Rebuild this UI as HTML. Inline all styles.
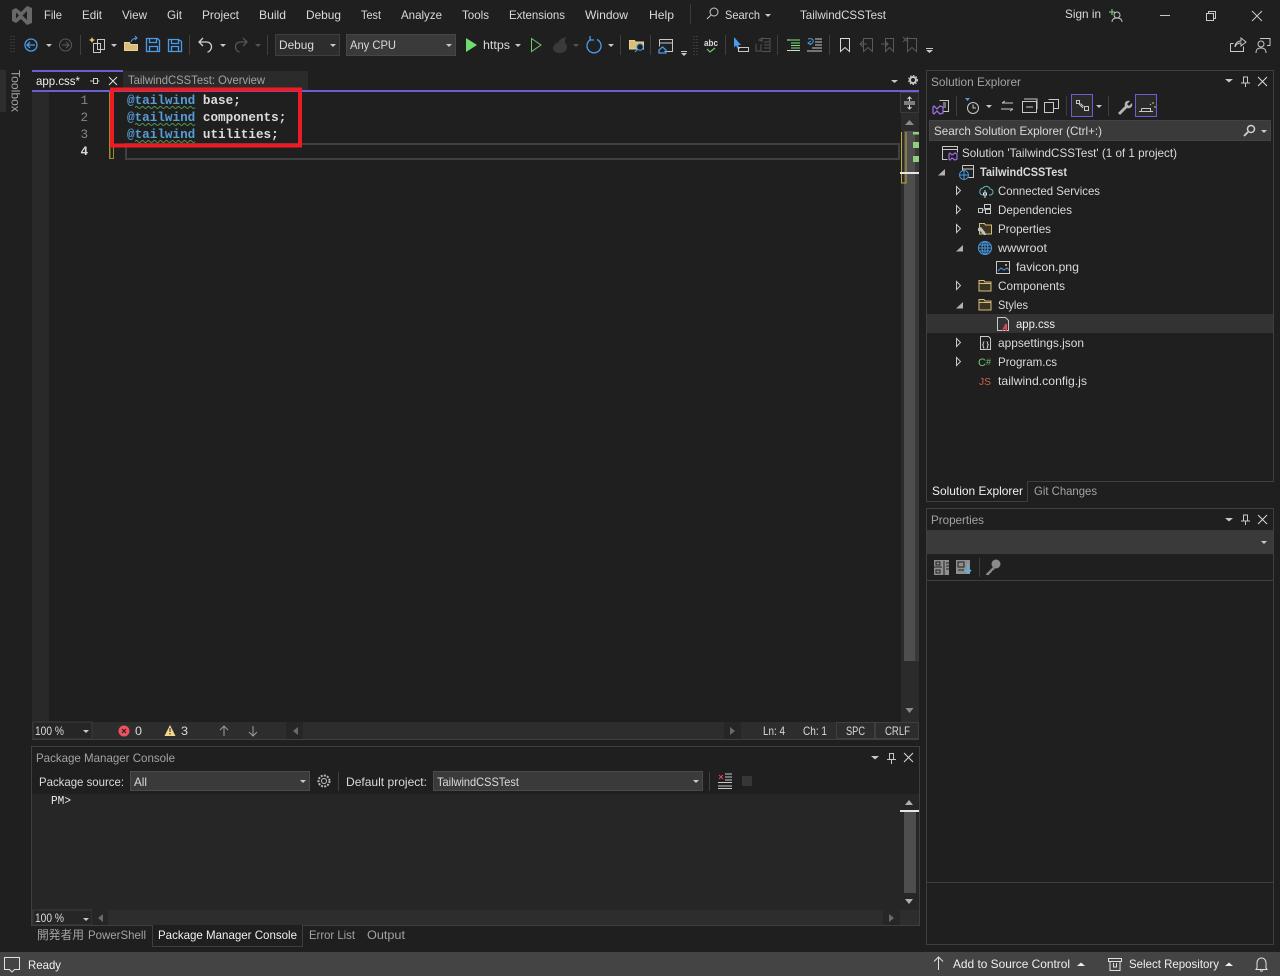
<!DOCTYPE html>
<html lang="en"><head><meta charset="utf-8"><title>TailwindCSSTest - Visual Studio</title>
<style>
html,body{margin:0;padding:0;background:#1f1f1f;overflow:hidden;width:1280px;height:976px}
svg{display:block;position:absolute;left:0;top:0}
text{font-family:"Liberation Sans","Noto Sans CJK JP",sans-serif;font-size:12px;fill:#dadada}
.d{fill:#a3a3a3}
.m{font-family:"Liberation Mono",monospace;font-size:12.65px;font-weight:bold}
.s{fill:none;stroke:#c8c8c8;stroke-width:1}
.b{fill:none;stroke:#4a9be8;stroke-width:1.3}
.g{fill:none;stroke:#5a5a5a;stroke-width:1}
.p{fill:#c8c8c8}
.st{fill:#efefef}
</style></head><body>
<svg width="1280" height="976" viewBox="0 0 1280 976" xmlns="http://www.w3.org/2000/svg">
<rect width="1280" height="976" fill="#1f1f1f"/>

<!-- Title bar -->
<path fill-rule="evenodd" fill="#686868" d="M12 10l4-2 5 4 6-6 5 2v15l-5 2-6-6-5 4-4-2zM16 12.500v6l3-3zM27 11l-4.500 4.500 4.500 4.500z"/>
<text x="44" y="19" textLength="18" lengthAdjust="spacingAndGlyphs">File</text>
<text x="82" y="19" textLength="20" lengthAdjust="spacingAndGlyphs">Edit</text>
<text x="122" y="19" textLength="25" lengthAdjust="spacingAndGlyphs">View</text>
<text x="167" y="19" textLength="15" lengthAdjust="spacingAndGlyphs">Git</text>
<text x="202" y="19" textLength="37" lengthAdjust="spacingAndGlyphs">Project</text>
<text x="259" y="19" textLength="27" lengthAdjust="spacingAndGlyphs">Build</text>
<text x="306" y="19" textLength="35" lengthAdjust="spacingAndGlyphs">Debug</text>
<text x="361" y="19" textLength="20" lengthAdjust="spacingAndGlyphs">Test</text>
<text x="401" y="19" textLength="41" lengthAdjust="spacingAndGlyphs">Analyze</text>
<text x="462" y="19" textLength="27" lengthAdjust="spacingAndGlyphs">Tools</text>
<text x="509" y="19" textLength="56" lengthAdjust="spacingAndGlyphs">Extensions</text>
<text x="585" y="19" textLength="43" lengthAdjust="spacingAndGlyphs">Window</text>
<text x="649" y="19" textLength="25" lengthAdjust="spacingAndGlyphs">Help</text>
<rect x="690" y="4" width="1" height="20" fill="#3a3a3a"/>
<circle cx="714" cy="12" r="4" class="s"/><path class="s" d="M711 15l-4 4"/>
<text x="725" y="19" textLength="35" lengthAdjust="spacingAndGlyphs">Search</text>
<path class="p" d="M765 14h6l-3 3z"/>
<text x="800" y="19" textLength="86" lengthAdjust="spacingAndGlyphs">TailwindCSSTest</text>
<text x="1065" y="18" textLength="36" lengthAdjust="spacingAndGlyphs">Sign in</text>
<path d="M1109 12h6M1112 9v6" stroke="#7fe07f" fill="none"/>
<circle cx="1117" cy="15" r="3" class="s"/><path class="s" d="M1112 22c0-3 2-4 5-4s5 1 5 4"/>
<rect x="1160" y="15" width="10" height="1" fill="#c8c8c8"/>
<path class="s" d="M1206.500 13.500h7v7h-7zM1208.500 13v-1.500h7v7h-2"/>
<path class="s" d="M1252 11l10 10M1262 11l-10 10"/>

<!-- Toolbar -->
<path d="M11 36v18M14 36v18" stroke="#555" stroke-dasharray="1 2" fill="none"/>
<circle cx="31" cy="45" r="6" class="b"/><path class="b" d="M35 45h-8M30 42l-3 3 3 3"/>
<path class="p" d="M46 44h6l-3 3z"/>
<circle cx="65.500" cy="45" r="6" class="g"/><path class="g" d="M62 45h7M66 42l3 3-3 3"/>
<rect x="80" y="35" width="1" height="20" fill="#3f3f3f"/>
<path d="M92 37l1 2 2 1-2 1-1 2-1-2-2-1 2-1z" fill="#e8c56a"/>
<path class="s" d="M97.500 39.500h7v10h-7zM93.500 43.500h7v9h-7z"/>
<path class="p" d="M111 44h6l-3 3z"/>
<path d="M124.500 42.500h5l1 2h7v6h-13z" fill="#d9bd79" stroke="#e8d096"/><path d="M131 42c1-3 3-4 6-4M135 36l2 2-2 2" stroke="#4a9be8" fill="none"/>
<path class="b" d="M146.500 38.500h11l2 2v11h-13zM149.500 38.500v4h7v-4M149.500 51.500v-5h8v5"/>
<path class="b" d="M168.500 39.500h10l3 2v10h-13zM171.500 39.500v4h7v-4M171.500 51.500v-5h7v5"/>
<rect x="189" y="35" width="1" height="20" fill="#3f3f3f"/>
<path d="M203 38l-4 4 4 4M199.500 42h7c3 0 5 2 5 5 0 2-2 5-4 5" fill="none" stroke="#d0d0d0" stroke-width="1.300"/>
<path class="p" d="M220 44h6l-3 3z"/>
<path d="M243 38l4 4-4 4M246.500 42h-6c-3 0-5 2-5 5 0 2 2 5 4 5" fill="none" stroke="#555" stroke-width="1.300"/>
<path d="M255 44h6l-3 3z" fill="#555"/>
<rect x="267" y="35" width="1" height="20" fill="#3f3f3f"/>
<rect x="275.500" y="34.500" width="64" height="21" fill="#2d2d2d" stroke="#3f3f3f"/>
<text x="279" y="49" textLength="35" lengthAdjust="spacingAndGlyphs">Debug</text>
<path class="p" d="M330 44h6l-3 3z"/>
<rect x="346.500" y="34.500" width="109" height="21" fill="#3a3a3a" stroke="#464646"/>
<text x="350" y="49" textLength="46" lengthAdjust="spacingAndGlyphs">Any CPU</text>
<path class="p" d="M446 44h6l-3 3z"/>
<path d="M466 38l11 7-11 7z" fill="#6fdc6f"/>
<text x="483" y="49" textLength="27" lengthAdjust="spacingAndGlyphs">https</text>
<path class="p" d="M515 44h6l-3 3z"/>
<path d="M531.500 38.500l9.500 6.500-9.500 6.500z" fill="none" stroke="#6fc96f"/>
<path d="M566 37c-5 1-8 4-8 7l-1-2c-2 2-4 4-4 6 0 3 3 5 7 5s7-3 7-6c0-2-1-3-2-4 0-2 0-4 1-6z" fill="#3a3a3a"/>
<path d="M573 44h6l-3 3z" fill="#555"/>
<path d="M591 39.500a7 7 0 1 0 6 0M590 36v4h4" fill="none" stroke="#4a9be8" stroke-width="1.300"/>
<path class="p" d="M608 44h6l-3 3z"/>
<rect x="620" y="35" width="1" height="20" fill="#3f3f3f"/>
<path d="M629.500 40.500h5l1 1.500h8v7h-14z" fill="#d9bd79" stroke="#e8d096"/><circle cx="640" cy="47" r="3.200" fill="#1f1f1f" stroke="#4a9be8"/><path d="M638 49l-3 3" stroke="#4a9be8"/>
<rect x="650" y="35" width="1" height="20" fill="#3f3f3f"/>
<path class="s" d="M659.500 39.500h13v12h-8M659.500 43h13M659.500 39.500v7"/><path class="b" d="M659 50l3.500-3 3.500 3v3h-7z"/>
<path class="p" d="M681 51h6v1h-6zM681 53h6l-3 3z"/>
<path d="M694 36v20M697 36v20" stroke="#555" stroke-dasharray="1 2" fill="none"/>
<text x="704" y="46" style="font-size:9px;font-weight:bold" textLength="14" lengthAdjust="spacingAndGlyphs">abc</text>
<path d="M707 49l3 3 5-4" stroke="#6fc96f" fill="none" stroke-width="1.200"/>
<rect x="725" y="35" width="1" height="20" fill="#3f3f3f"/>
<path d="M734 37l7 8h-3l2 4-2 .500-2-4-2 2z" fill="#4a9be8"/><path class="s" d="M738.500 47.500h10v4h-10z"/>
<path d="M756 44v7h5v-7M759 40l3-2v3zM762 38.500h8v13h-8M764 42h5M764 45h5M764 48h5" fill="none" stroke="#555"/>
<rect x="777" y="35" width="1" height="20" fill="#3f3f3f"/>
<path d="M787 40h13M791 43h9M791 45.500h9M791 48h9M787 50.500h13" stroke="#7fe07f" fill="none"/><path d="M787 40h3M787 50.500h13" stroke="#d8d8d8"/>
<path d="M808 39c3-1 6 0 5 3s-4 2-5 1M811 45l-3-2 3-2" stroke="#4a9be8" fill="none"/><path class="s" d="M815 39h7M815 42h7M815 45h7M812 48h10M807 51h15"/>
<rect x="829" y="35" width="1" height="20" fill="#3f3f3f"/>
<path class="s" d="M840.500 38.500h9v13l-4.500-4-4.500 4z" style="stroke:#d8d8d8"/>
<path class="g" d="M863.500 38.500h9v13l-4.500-4-4.500 4zM860 44h7M863 41l-3 3 3 3"/>
<path class="g" d="M885.500 38.500h8v13l-4-4-4 4zM881 44h7M885 41l3 3-3 3"/>
<path class="g" d="M907.500 38.500h9v13l-4.500-4-4.500 4zM903 37l5 5M908 37l-5 5"/>
<path class="p" d="M926 48h7v1h-7zM926 50h7l-3.500 3z"/>
<path class="s" d="M1230.500 43.500h3M1230.500 43.500v8h13v-5M1235 47c0-4 3-6 6-6v-3l5 4-5 4v-3c-3 0-5 1-6 4z"/>
<circle cx="1261" cy="44" r="3" class="s"/><path class="s" d="M1256 53c0-4 2-5 5-5s5 1 5 5M1260 38.500h10v7h-3"/>

<!-- Toolbox -->
<rect x="0" y="70" width="6" height="42" fill="#2e2e2e"/>
<text transform="translate(11.500,70) rotate(90)" class="d" textLength="42" lengthAdjust="spacingAndGlyphs">Toolbox</text>

<!-- Tabs -->
<rect x="32" y="70" width="91" height="20" fill="#1f1f1f"/>
<rect x="32" y="70" width="91" height="2" fill="#6c5fd6"/>
<text x="36" y="85" style="fill:#f0f0f0" textLength="44" lengthAdjust="spacingAndGlyphs">app.css*</text>
<path class="s" d="M90 81h3M93.500 78.500v5h4v-5zM97.500 81h2"/>
<path class="s" d="M109 77l8 8M117 77l-8 8" style="stroke:#e0e0e0"/>
<rect x="123" y="71" width="185" height="19" fill="#2b2b2b"/>
<text x="128" y="84" class="d" textLength="137" lengthAdjust="spacingAndGlyphs">TailwindCSSTest: Overview</text>
<path class="p" d="M891 80h7l-3.500 3z"/>
<circle cx="913" cy="80" r="3" fill="none" stroke="#c8c8c8" stroke-width="2"/><circle cx="913" cy="80" r="4.500" fill="none" stroke="#c8c8c8" stroke-width="1" stroke-dasharray="1.500 1.500"/>
<rect x="32" y="90" width="887" height="2" fill="#6c5fd6"/>

<!-- Editor -->
<rect x="32" y="92" width="887" height="630" fill="#1f1f1f"/>
<rect x="32" y="92" width="17" height="630" fill="#292929"/>
<text class="m" x="80.500" y="104" style="fill:#858585;font-weight:normal">1</text>
<text class="m" x="80.500" y="121" style="fill:#858585;font-weight:normal">2</text>
<text class="m" x="80.500" y="138" style="fill:#858585;font-weight:normal">3</text>
<text class="m" x="80.500" y="155" style="fill:#d8d8d8">4</text>
<rect x="109" y="92" width="1.500" height="66" fill="#a08a30"/>
<rect x="109.500" y="143.500" width="4" height="15" fill="none" stroke="#a08a30"/>
<rect x="126" y="144" width="773" height="15" fill="none" stroke="#404040" stroke-width="2"/>
<text class="m" x="127" y="104"><tspan fill="#569cd6">@tailwind</tspan><tspan fill="#dcdcdc"> base;</tspan></text>
<text class="m" x="127" y="121"><tspan fill="#569cd6">@tailwind</tspan><tspan fill="#dcdcdc"> components;</tspan></text>
<text class="m" x="127" y="138"><tspan fill="#569cd6">@tailwind</tspan><tspan fill="#dcdcdc"> utilities;</tspan></text>
<path d="M135 107.500q1.500-2 3 0t3 0 3 0 3 0 3 0 3 0 3 0 3 0 3 0 3 0 3 0 3 0 3 0 3 0 3 0 3 0 3 0 3 0 3 0 3 0" fill="none" stroke="#4f9b4f"/>
<path d="M135 124.500q1.500-2 3 0t3 0 3 0 3 0 3 0 3 0 3 0 3 0 3 0 3 0 3 0 3 0 3 0 3 0 3 0 3 0 3 0 3 0 3 0 3 0" fill="none" stroke="#4f9b4f"/>
<path d="M135 141.500q1.500-2 3 0t3 0 3 0 3 0 3 0 3 0 3 0 3 0 3 0 3 0 3 0 3 0 3 0 3 0 3 0 3 0 3 0 3 0 3 0 3 0" fill="none" stroke="#4f9b4f"/>
<rect x="112" y="89.500" width="188" height="56" fill="none" stroke="#ed1c24" stroke-width="4"/>

<!-- Editor scrollbar -->
<rect x="901" y="92" width="18" height="630" fill="#2b2b2b"/>
<rect x="900.500" y="92.500" width="18" height="20" fill="#262626" stroke="#3a3a3a"/>
<path d="M904 102h11M904 104h11M909.500 97v4M909.500 105v4M907.500 99l2-2 2 2M907.500 107l2 2 2-2" stroke="#d8d8d8" fill="none"/>
<path d="M905 125l4.500-5 4.500 5z" fill="#8a8a8a"/>
<rect x="904" y="131" width="12" height="530" fill="#4e4e4e"/>
<rect x="915" y="131" width="4" height="530" fill="#383838"/>
<path d="M901.500 132v51h4.500v-51" fill="none" stroke="#c2a83e"/><path d="M901.500 183h4.500" stroke="#c2a83e"/>
<rect x="913" y="132" width="6" height="2.500" fill="#8fd07f"/>
<rect x="913" y="142" width="6" height="6" fill="#8fd07f"/>
<rect x="913" y="156" width="6" height="6" fill="#8fd07f"/>
<rect x="900" y="172" width="19" height="2" fill="#e6e6e6"/>
<path d="M905.500 708l4 5 4-5z" fill="#8a8a8a"/>

<!-- Editor status row -->
<rect x="32" y="722" width="887" height="17" fill="#2d2d2d"/>
<rect x="32" y="739" width="887" height="1" fill="#3f3f3f"/>
<rect x="33" y="722" width="59" height="17" fill="#262626" stroke="#3c3c3c"/>
<text x="35" y="735" textLength="29" lengthAdjust="spacingAndGlyphs">100 %</text>
<path class="p" d="M83 730h6l-3 3z"/>
<circle cx="124" cy="731" r="5.500" fill="#f0505f"/><path d="M122 729l4 4M126 729l-4 4" stroke="#222" stroke-width="1.200"/>
<text x="135" y="735" textLength="7" lengthAdjust="spacingAndGlyphs">0</text>
<path d="M170 725l5.500 11h-11z" fill="#f3d98c"/><rect x="169.500" y="728" width="1" height="4" fill="#222"/><rect x="169.500" y="733" width="1" height="1.500" fill="#222"/>
<text x="181" y="735" textLength="7" lengthAdjust="spacingAndGlyphs">3</text>
<path d="M224 736v-10M220 730l4-4 4 4" class="s" style="stroke:#9a9a9a"/>
<path d="M253 726v10M249 732l4 4 4-4" class="s" style="stroke:#9a9a9a"/>
<rect x="286" y="722" width="17" height="17" fill="#262626"/>
<path d="M298 727v8l-5-4z" fill="#6a6a6a"/>
<rect x="724" y="722" width="17" height="17" fill="#262626"/>
<path d="M730 727v8l5-4z" fill="#6a6a6a"/>
<text x="763" y="735" textLength="22" lengthAdjust="spacingAndGlyphs">Ln: 4</text>
<text x="803" y="735" textLength="24" lengthAdjust="spacingAndGlyphs">Ch: 1</text>
<rect x="836.500" y="722.500" width="38" height="16" fill="none" stroke="#3f3f3f"/>
<text x="846" y="735" textLength="19" lengthAdjust="spacingAndGlyphs">SPC</text>
<rect x="875.500" y="722.500" width="43" height="16" fill="none" stroke="#3f3f3f"/>
<text x="885" y="735" textLength="25" lengthAdjust="spacingAndGlyphs">CRLF</text>

<!-- Package Manager Console -->
<rect x="31.500" y="746.500" width="888" height="179" fill="#1f1f1f" stroke="#3f3f3f"/>
<text x="36" y="762" class="d" textLength="139" lengthAdjust="spacingAndGlyphs">Package Manager Console</text>
<path class="p" d="M871 756h8l-4 3.500z"/>
<path class="s" d="M889.500 753.500h4v6h-4zM887 759.500h9M891.500 760v4"/>
<path class="s" d="M904 753l9 9M913 753l-9 9" style="stroke:#d8d8d8"/>
<text x="39" y="786" textLength="85" lengthAdjust="spacingAndGlyphs">Package source:</text>
<rect x="130.500" y="771.500" width="179" height="19" fill="#3a3a3a" stroke="#4a4a4a"/>
<text x="134" y="786" textLength="13" lengthAdjust="spacingAndGlyphs">All</text>
<path class="p" d="M300 780h6l-3 3z"/>
<circle cx="324" cy="781" r="2.500" class="s"/><circle cx="324" cy="781" r="5.500" fill="none" stroke="#b8b8b8" stroke-width="2" stroke-dasharray="2 1.200"/>
<rect x="338" y="772" width="1" height="19" fill="#3f3f3f"/>
<text x="346" y="786" textLength="81" lengthAdjust="spacingAndGlyphs">Default project:</text>
<rect x="433.500" y="771.500" width="269" height="19" fill="#3a3a3a" stroke="#4a4a4a"/>
<text x="437" y="786" textLength="82" lengthAdjust="spacingAndGlyphs">TailwindCSSTest</text>
<path class="p" d="M693 780h6l-3 3z"/>
<rect x="709" y="772" width="1" height="19" fill="#3f3f3f"/>
<path d="M719 775l4 4M723 775l-4 4" stroke="#e0455a" fill="none"/>
<path class="s" d="M725 774h7M725 777h7M725 780h7M718 782.500h14M718 786h14M718 788.500h14"/>
<rect x="742" y="776" width="10" height="10" fill="#363636"/>
<rect x="32" y="794" width="887" height="116" fill="#262626"/>
<text x="51" y="804" style="font-family:'Liberation Mono',monospace;fill:#e8e8e8;font-size:12px" textLength="20" lengthAdjust="spacingAndGlyphs">PM&gt;</text>
<rect x="904" y="811" width="12" height="82" fill="#4e4e4e"/>
<rect x="900" y="810" width="19" height="2" fill="#e6e6e6"/>
<path d="M905 805l4-5 4 5z" fill="#b0b0b0"/>
<path d="M905 899l4 5 4-5z" fill="#b0b0b0"/>
<rect x="32" y="910" width="887" height="15" fill="#2d2d2d"/>
<rect x="33" y="910" width="59" height="15" fill="#262626" stroke="#3c3c3c"/>
<text x="35" y="922" textLength="29" lengthAdjust="spacingAndGlyphs">100 %</text>
<path class="p" d="M83 918h6l-3 3z"/>
<rect x="92" y="910" width="16" height="15" fill="#262626"/>
<path d="M103 914v8l-5-4z" fill="#6a6a6a"/>
<rect x="883" y="910" width="17" height="15" fill="#262626"/>
<path d="M889 914v8l5-4z" fill="#6a6a6a"/>

<!-- Bottom tabs -->
<text x="37" y="939" class="d" textLength="47" lengthAdjust="spacingAndGlyphs">開発者用</text>
<text x="88" y="939" class="d" textLength="58" lengthAdjust="spacingAndGlyphs">PowerShell</text>
<path d="M152.500 925v21.500h150V925" fill="#1f1f1f" stroke="#3f3f3f"/>
<text x="158" y="939" style="fill:#f0f0f0" textLength="139" lengthAdjust="spacingAndGlyphs">Package Manager Console</text>
<text x="309" y="939" class="d" textLength="46" lengthAdjust="spacingAndGlyphs">Error List</text>
<text x="367" y="939" class="d" textLength="38" lengthAdjust="spacingAndGlyphs">Output</text>

<!-- Solution Explorer -->
<rect x="926.500" y="70.500" width="347" height="411" fill="#1f1f1f" stroke="#3f3f3f"/>
<text x="931" y="86" class="d" textLength="90" lengthAdjust="spacingAndGlyphs">Solution Explorer</text>
<path class="p" d="M1225 79h8l-4 3.500z"/>
<path class="s" d="M1243.500 77h4v6h-4zM1241 83h9M1245.500 83v4"/>
<path class="s" d="M1258 77l9 9M1267 77l-9 9" style="stroke:#d8d8d8"/>
<path class="s" d="M939.500 100.500h9v11h-6M943 103h3M943 105h3M943 107h3"/>
<path d="M934 106l3 3 3-3 3 1v6l-3 1-3-3-3 3-1-1v-6z" fill="none" stroke="#9b6fe0" stroke-width="1.300"/>
<rect x="956" y="96" width="1" height="20" fill="#3f3f3f"/>
<path d="M965 98h5l-2.500 3z" fill="#4a9be8"/>
<circle cx="973" cy="108" r="5.500" class="s"/><path class="s" d="M973 104.500v3.500h3"/>
<path class="p" d="M986 105h6l-3 3z"/>
<path class="s" d="M1002 103h11M1002 103l3-2M1001 109h12M1013 109l-3 2"/>
<rect x="1022.500" y="101.500" width="14" height="11" class="s" style="fill:none"/><path class="s" d="M1026 107h7M1024 99h13v10"/>
<path class="s" d="M1044.500 102.500h9v10h-9zM1048.500 99.500h10v9h-5"/>
<rect x="1066" y="96" width="1" height="20" fill="#3f3f3f"/>
<rect x="1071.500" y="94.500" width="21" height="22" fill="#2a2a2a" stroke="#6c5fd6"/>
<path class="s" d="M1076.500 100.500h3v3h-3zM1080.500 103.500l3 3M1084.500 106.500h4v4h-4zM1079 104l4 4"/>
<path class="p" d="M1096 105h6l-3 3z"/>
<rect x="1108" y="96" width="1" height="20" fill="#3f3f3f"/>
<path d="M1118 113l7-7c-1-3 1-6 5-5l-3 3 2 2 3-3c1 4-2 6-5 5l-7 7z" fill="#b4b4b4"/>
<rect x="1135.500" y="94.500" width="21" height="22" fill="#2a2a2a" stroke="#6c5fd6"/>
<path class="s" d="M1139 111.500h14M1141.500 108.500h9v3M1141.500 108.500v3"/><path d="M1153 102v2M1150 105l1-1M1154 107h2" stroke="#e8c56a" fill="none"/>
<rect x="929.500" y="120.500" width="341" height="20" fill="#3a3a3a" stroke="#424242"/>
<text x="934" y="135" textLength="168" lengthAdjust="spacingAndGlyphs">Search Solution Explorer (Ctrl+:)</text>
<circle cx="1251" cy="129" r="3.500" fill="none" stroke="#d0d0d0" stroke-width="1.500"/><path d="M1248 132l-4 4" stroke="#d0d0d0" stroke-width="1.800"/>
<path class="p" d="M1261 130h6l-3 3z"/>

<rect x="927" y="314" width="346" height="19" fill="#333333"/>
<!-- Tree -->
<path class="s" d="M942.500 146.500h15v6M942.500 149.500h15M942.500 146.500v13h5"/>
<path d="M950 153l2 2 3-2 2 1v5l-2 1-3-2-2 2-1-1v-5z" fill="none" stroke="#9b6fe0" stroke-width="1.200"/>
<text x="962" y="157" textLength="215" lengthAdjust="spacingAndGlyphs">Solution 'TailwindCSSTest' (1 of 1 project)</text>
<path d="M945 169v6.500h-7z" fill="#b0b0b0"/>
<path class="s" d="M962.500 165.500h11v12h-5M962.500 169h11M962.500 165.500v6"/>
<circle cx="964" cy="175" r="4.500" fill="#1f1f1f" stroke="#4a9be8"/><path d="M959.500 175h9M964 170.500v9" stroke="#4a9be8"/>
<text x="980" y="176" style="font-weight:bold" textLength="87" lengthAdjust="spacingAndGlyphs">TailwindCSSTest</text>

<path class="s" d="M956.500 186.500l4 4-4 4z"/>
<path d="M980 191a3 3 0 0 1 3-3 4 4 0 0 1 7 1 3 3 0 0 1 0 6h-1M983 195a3 3 0 0 1-3-4" fill="none" stroke="#5fb4c8"/><path d="M985 190v3M983.500 193h3v2h-3zM985 195v3" stroke="#d0e8f0" fill="none"/>
<text x="998" y="195" textLength="102" lengthAdjust="spacingAndGlyphs">Connected Services</text>

<path class="s" d="M956.500 205.500l4 4-4 4z"/>
<path class="s" d="M978.500 208.500h4v4h-4zM984.500 204.500h6v4h-6zM985.500 209.500h5v4h-5zM982.500 210h3"/>
<text x="998" y="214" textLength="74" lengthAdjust="spacingAndGlyphs">Dependencies</text>

<path class="s" d="M956.500 224.500l4 4-4 4z"/>
<path d="M979.500 223.500h5l1 1.500h6v9h-12z" fill="#3a3424" stroke="#d9bd79"/><path d="M978 228l3-1 4 5 1 3-2 0-4-4-2 0z" fill="#c0c0c0"/>
<text x="998" y="233" textLength="53" lengthAdjust="spacingAndGlyphs">Properties</text>

<path d="M963 245v6.500h-7z" fill="#b0b0b0"/>
<circle cx="985" cy="248" r="6.500" fill="none" stroke="#4a9be8"/><path d="M978.500 248h13M985 241.500v13M979.500 245h11M979.500 251h11" stroke="#4a9be8" fill="none"/><ellipse cx="985" cy="248" rx="3" ry="6.500" fill="none" stroke="#4a9be8"/>
<text x="998" y="252" textLength="49" lengthAdjust="spacingAndGlyphs">wwwroot</text>

<rect x="996.500" y="261.500" width="13" height="12" class="s"/>
<path d="M998 271l3-3 3 2 3-2 2 2" fill="none" stroke="#4a9be8"/><circle cx="1006" cy="265" r="1" fill="#e8c56a"/>
<text x="1016" y="271" textLength="63" lengthAdjust="spacingAndGlyphs">favicon.png</text>

<path class="s" d="M956.500 281.500l4 4-4 4z"/>
<path d="M979 280.500h5l1 1.500h6v9h-12z" fill="#3a3424" stroke="#d9bd79"/><path d="M979.500 283.500h11" stroke="#d9bd79"/>
<text x="998" y="290" textLength="67" lengthAdjust="spacingAndGlyphs">Components</text>

<path d="M963 302v6.500h-7z" fill="#b0b0b0"/>
<path d="M979 299.500h5l1 1.500h6v9h-12z" fill="#3a3424" stroke="#d9bd79"/><path d="M979.500 302.500h11" stroke="#d9bd79"/>
<text x="998" y="309" textLength="30" lengthAdjust="spacingAndGlyphs">Styles</text>

<path class="s" d="M997.500 317.500h8l3 3v10h-11z"/>
<path d="M1002 331l3-7h2v7h-1.500v-2h-1.500l-1 2z" fill="#e0455a"/>
<text x="1016" y="328" style="fill:#f0f0f0" textLength="39" lengthAdjust="spacingAndGlyphs">app.css</text>

<path class="s" d="M956.500 338.500l4 4-4 4z"/>
<path class="s" d="M980.500 336.500h8l2 2v11h-10z"/><text x="982" y="347" style="font-size:7px;font-weight:bold" textLength="7" lengthAdjust="spacingAndGlyphs">{ }</text>
<text x="998" y="347" textLength="86" lengthAdjust="spacingAndGlyphs">appsettings.json</text>

<path class="s" d="M956.500 357.500l4 4-4 4z"/>
<text x="978" y="366" style="fill:#6fc96f;font-size:11px">C</text><text x="986" y="365" style="fill:#6fc96f;font-size:9px">#</text>
<text x="998" y="366" textLength="59" lengthAdjust="spacingAndGlyphs">Program.cs</text>

<text x="979" y="385" style="fill:#d0604a;font-size:10px" textLength="12" lengthAdjust="spacingAndGlyphs">JS</text>
<text x="998" y="385" textLength="89" lengthAdjust="spacingAndGlyphs">tailwind.config.js</text>

<!-- SE tabs -->
<path d="M926.500 481v20.500h101V481" fill="#1f1f1f" stroke="#3f3f3f"/>
<rect x="927" y="481" width="100" height="1" fill="#1f1f1f"/>
<text x="932" y="495" style="fill:#f0f0f0" textLength="91" lengthAdjust="spacingAndGlyphs">Solution Explorer</text>
<text x="1034" y="495" class="d" textLength="63" lengthAdjust="spacingAndGlyphs">Git Changes</text>

<!-- Properties -->
<rect x="926.500" y="508.500" width="347" height="436" fill="#1f1f1f" stroke="#3f3f3f"/>
<text x="931" y="524" class="d" textLength="53" lengthAdjust="spacingAndGlyphs">Properties</text>
<path class="p" d="M1225 518h8l-4 3.500z"/>
<path class="s" d="M1243.500 515h4v6h-4zM1241 521h9M1245.500 521v4"/>
<path class="s" d="M1258 515l9 9M1267 515l-9 9" style="stroke:#d8d8d8"/>
<rect x="927" y="530" width="346" height="24" fill="#3a3a3a"/>
<path class="p" d="M1261 541h6l-3 3z"/>
<rect x="934" y="560" width="15" height="15" fill="#8f8f8f"/><path d="M936 562h4v3h-4zM936 570h4v3h-4zM934 567h8M944 561v14M946 563h3M946 566h3M946 569h3" stroke="#1f1f1f" fill="none"/>
<rect x="956" y="560" width="14" height="14" fill="#8f8f8f"/><path d="M958 562h6v5h-6zM958 570h6" stroke="#1f1f1f" fill="none"/><path d="M968 564v8M965 570l3 3 3-3" stroke="#5fb4e8" fill="none" stroke-width="1.500"/>
<rect x="979" y="558" width="1" height="19" fill="#3f3f3f"/>
<circle cx="996" cy="564" r="4.500" fill="#8a8a8a"/><path d="M993 567l-7 7v1h3l1-2h1l1-2 3-2z" fill="#8a8a8a"/>
<rect x="926.500" y="580.500" width="347" height="302" fill="none" stroke="#3f3f3f"/>

<!-- Status bar -->
<rect x="0" y="952" width="1280" height="24" fill="#444444"/>
<path class="s" d="M4.500 957.500h15v12h-5l-2.500 2.500-2.500-2.500h-5z" style="stroke:#e0e0e0"/>
<text x="28" y="969" class="st" textLength="33" lengthAdjust="spacingAndGlyphs">Ready</text>
<path d="M938.500 970v-13M934 961.500l4.500-4.500 4.500 4.500" fill="none" stroke="#e0e0e0"/>
<text x="953" y="968" class="st" textLength="117" lengthAdjust="spacingAndGlyphs">Add to Source Control</text>
<path d="M1077 966h8l-4-3.500z" fill="#f0f0f0"/>
<path d="M1108.500 958.500h13v3h-13zM1110 961.500v9h10v-9M1113.500 963v4h3v-4" fill="none" stroke="#e0e0e0"/>
<text x="1129" y="968" class="st" textLength="90" lengthAdjust="spacingAndGlyphs">Select Repository</text>
<path d="M1225 966h8l-4-3.500z" fill="#f0f0f0"/>
<path d="M1257 968v-5c0-3 2-5 4.500-5s4.500 2 4.500 5v5l1 1.500h-11zM1260 970.500a2 2 0 0 0 3 0" fill="none" stroke="#e0e0e0"/>
</svg>
</body></html>
